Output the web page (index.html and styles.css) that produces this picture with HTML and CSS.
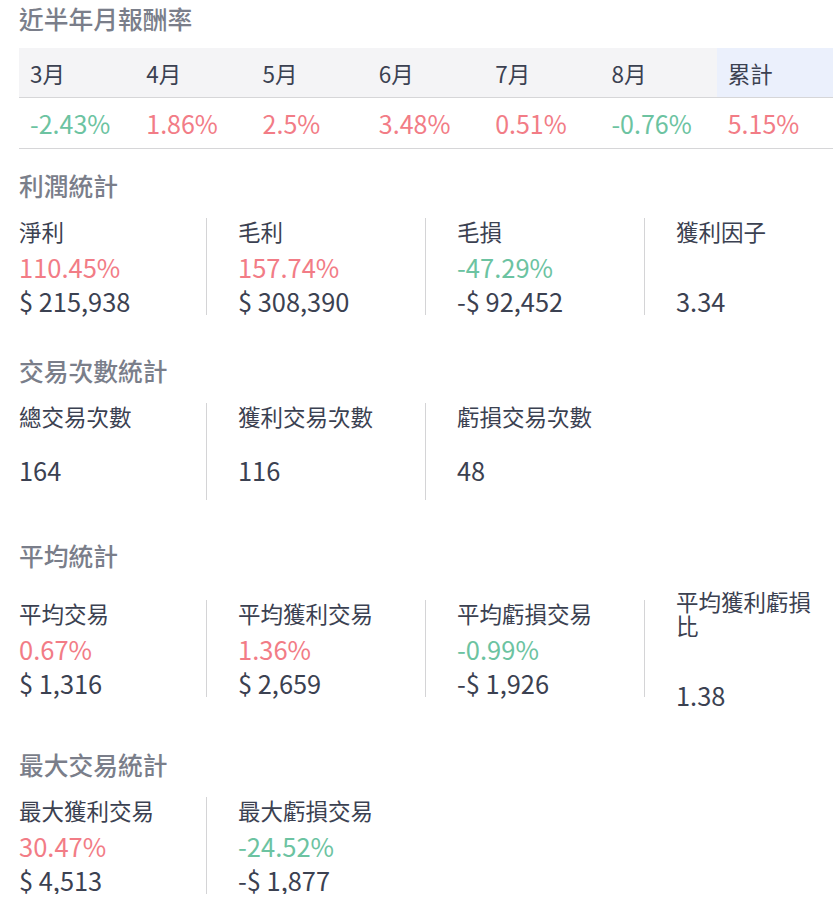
FILE: index.html
```html
<!DOCTYPE html>
<html lang="zh-Hant">
<head>
<meta charset="utf-8">
<title>績效統計</title>
<link rel="stylesheet" href="styles.css">
</head>
<body>
<div class="page">
  <h2 class="sec-title first">近半年月報酬率</h2>
  <div class="months">
    <div class="mrow head">
      <div class="cell">3月</div>
      <div class="cell">4月</div>
      <div class="cell">5月</div>
      <div class="cell">6月</div>
      <div class="cell">7月</div>
      <div class="cell">8月</div>
      <div class="cell total">累計</div>
    </div>
    <div class="mrow vals">
      <div class="cell down">-2.43%</div>
      <div class="cell up">1.86%</div>
      <div class="cell up">2.5%</div>
      <div class="cell up">3.48%</div>
      <div class="cell up">0.51%</div>
      <div class="cell down">-0.76%</div>
      <div class="cell up">5.15%</div>
    </div>
  </div>

  <h2 class="sec-title">利潤統計</h2>
  <div class="stats">
    <div class="item"><div class="label">淨利</div><div class="pct up">110.45%</div><div class="val">$ 215,938</div></div>
    <div class="item"><div class="label">毛利</div><div class="pct up">157.74%</div><div class="val">$ 308,390</div></div>
    <div class="item"><div class="label">毛損</div><div class="pct down">-47.29%</div><div class="val">-$ 92,452</div></div>
    <div class="item"><div class="label">獲利因子</div><div class="pct"></div><div class="val">3.34</div></div>
  </div>

  <h2 class="sec-title">交易次數統計</h2>
  <div class="stats counts">
    <div class="item"><div class="label">總交易次數</div><div class="val">164</div></div>
    <div class="item"><div class="label">獲利交易次數</div><div class="val">116</div></div>
    <div class="item"><div class="label">虧損交易次數</div><div class="val">48</div></div>
  </div>

  <h2 class="sec-title">平均統計</h2>
  <div class="stats">
    <div class="item"><div class="label">平均交易</div><div class="pct up">0.67%</div><div class="val">$ 1,316</div></div>
    <div class="item"><div class="label">平均獲利交易</div><div class="pct up">1.36%</div><div class="val">$ 2,659</div></div>
    <div class="item"><div class="label">平均虧損交易</div><div class="pct down">-0.99%</div><div class="val">-$ 1,926</div></div>
    <div class="item"><div class="label narrow">平均獲利虧損比</div><div class="pct"></div><div class="val">1.38</div></div>
  </div>

  <h2 class="sec-title">最大交易統計</h2>
  <div class="stats">
    <div class="item"><div class="label">最大獲利交易</div><div class="pct up">30.47%</div><div class="val">$ 4,513</div></div>
    <div class="item"><div class="label">最大虧損交易</div><div class="pct down">-24.52%</div><div class="val">-$ 1,877</div></div>
  </div>
</div>
</body>
</html>
```
FILE: styles.css
```css
html, body {
  margin: 0;
  padding: 0;
  background: #ffffff;
}

body {
  font-family: "Noto Sans CJK TC", "Noto Sans", sans-serif;
  color: #3b4151;
}

.page {
  width: 814px;
  padding: 2px 5px 0 19px;
}

.sec-title {
  margin: 39px 0 17px;
  font-size: 24.75px;
  line-height: 32px;
  font-weight: 500;
  color: #7a7e8a;
}

.sec-title.first {
  margin: 0 0 14px;
}

.months {
  width: 814px;
}

.mrow {
  display: grid;
  grid-template-columns: repeat(7, 1fr);
  border-bottom: 1px solid #d6d6d8;
}

.mrow .cell {
  padding: 0 11px;
  display: flex;
  align-items: center;
}

.mrow.head {
  background: #f4f4f6;
  height: 50px;
  box-sizing: border-box;
}

.mrow.head .cell {
  font-size: 22.5px;
  color: #3b4151;
}

.mrow.head .cell.total {
  background: #ebf0fc;
}

.mrow.vals {
  height: 51px;
  box-sizing: border-box;
}

.mrow.vals .cell {
  font-size: 25px;
}

.up { color: #f27c86; }
.down { color: #6cc3a1; }

.months + .sec-title {
  margin-top: 20px;
}

.stats {
  display: grid;
  grid-template-columns: repeat(4, 188px);
  column-gap: 31px;
  align-items: center;
}

.item {
  display: flex;
  flex-direction: column;
  min-height: 97px;
  padding-top: 1px;
  box-sizing: border-box;
  border-right: 1px solid #d4d4d6;
}

.item:last-child {
  border-right: none;
}

.label {
  font-size: 22.5px;
  line-height: 24px;
  color: #3b4151;
}

.label.narrow {
  width: 150px;
}

.pct {
  margin-top: 9px;
  font-size: 25.5px;
  line-height: 30px;
  height: 30px;
}

.val {
  margin-top: 5px;
  font-size: 25.4px;
  line-height: 28px;
  color: #3b4151;
}

.counts .val {
  margin-top: 28px;
}
```
